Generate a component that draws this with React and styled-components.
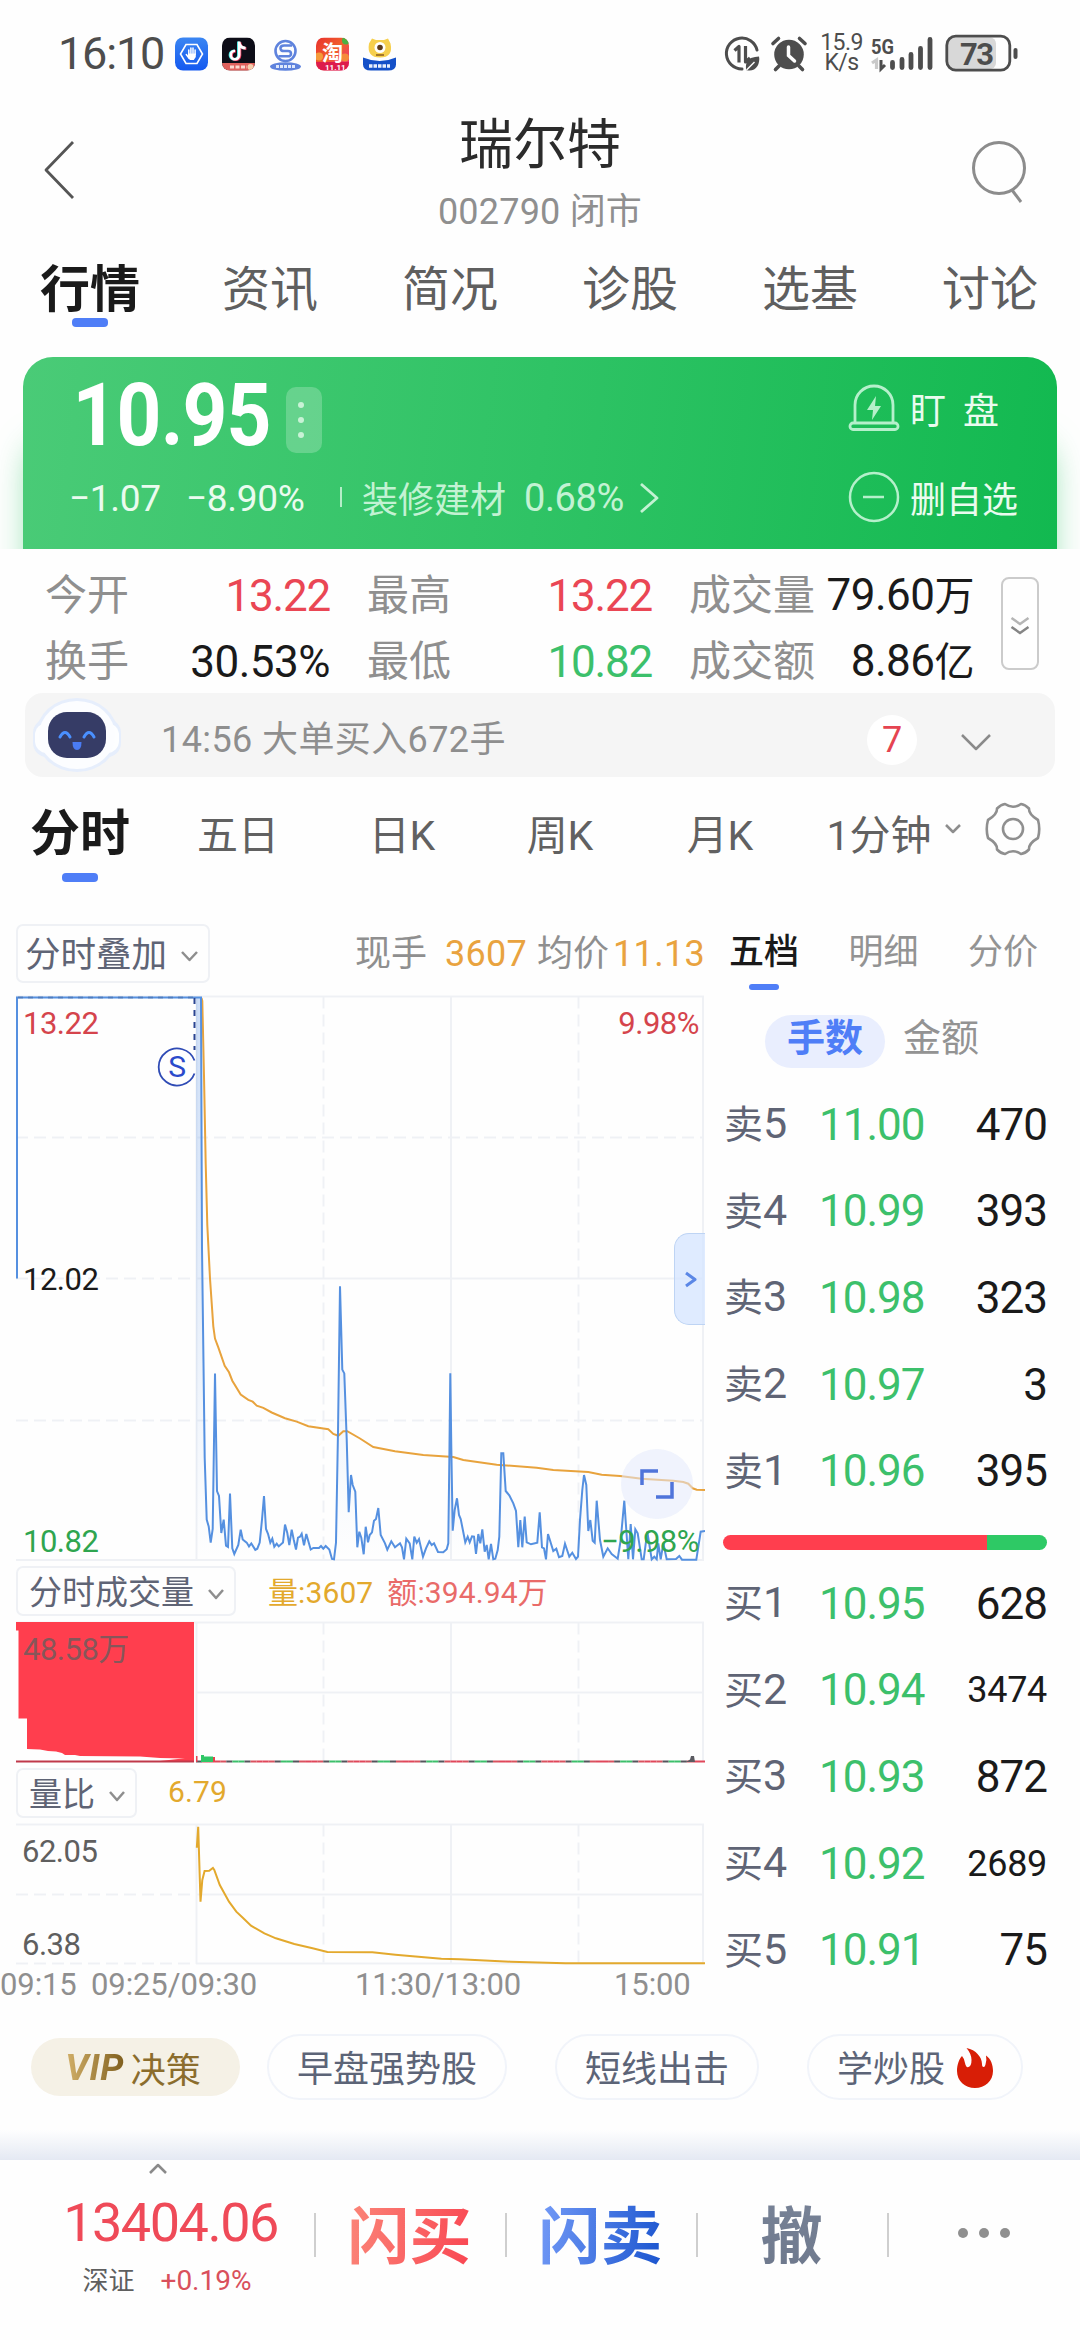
import React from 'react';
import styled, { createGlobalStyle, css } from 'styled-components';

const mainTabs = ['行情', '资讯', '简况', '诊股', '选基', '讨论'];

const stats = [
  { label: '今开', value: '13.22', color: '#ea4654' },
  { label: '最高', value: '13.22', color: '#ea4654' },
  { label: '成交量', value: '79.60', unit: '万', color: '#1a1a1a' },
  { label: '换手', value: '30.53%', color: '#1a1a1a' },
  { label: '最低', value: '10.82', color: '#3cc06b' },
  { label: '成交额', value: '8.86', unit: '亿', color: '#1a1a1a' },
];

const periods = ['分时', '五日', '日K', '周K', '月K'];

const asks = [
  ['5', '11.00', '470'],
  ['4', '10.99', '393'],
  ['3', '10.98', '323'],
  ['2', '10.97', '3'],
  ['1', '10.96', '395'],
];

const bids = [
  ['1', '10.95', '628'],
  ['2', '10.94', '3474'],
  ['3', '10.93', '872'],
  ['4', '10.92', '2689'],
  ['5', '10.91', '75'],
];

const pricePoints =
  '17,1278.5 17,997.6 201,997.6 202,1248 203.5,1363 204.7,1458 206.7,1519.6 208.7,1526.5 210.7,1542.6 212.7,1529 215,1373.4 217,1491 219,1496 221.3,1533 223.7,1519.6 226,1545.6 228,1547 230,1493.6 232.3,1548.3 234.3,1554 238.3,1545 240.7,1529.6 242.7,1539.5 246.7,1542.6 249,1546.4 251.3,1543.4 255.3,1549.8 257.3,1548.7 259.7,1542.6 262,1519.6 264,1496 266,1529 268,1533.8 270.3,1542.6 272.3,1538.7 274.3,1546.8 276.7,1543.7 278.7,1546.4 283,1542.6 285,1524.6 287.3,1533 289.3,1545.2 291.7,1529.6 293.7,1539.5 296,1549.5 298,1537.6 300,1536.8 301.7,1533.8 304,1545.2 306.3,1534 308.7,1542.6 310.7,1549.5 313.3,1548 319,1548 321,1546 323.3,1548.7 325.7,1546 329.3,1549.5 332,1559 334,1559.4 336,1542.6 338,1431.6 340,1286.2 342.3,1369.6 344.3,1373.4 346.7,1439 348.7,1512.3 351,1475 352.7,1485 355.3,1491.7 357.3,1547.3 359.3,1531.7 361.3,1537.7 363.7,1554.3 365.7,1526.7 368,1542.3 369.7,1535 372,1532.3 374,1520.7 376,1519 378.3,1508 380.7,1535 385,1543.3 387.3,1549.7 391.3,1541.3 395,1547.3 400,1543.3 402,1547.3 404,1559.3 406.3,1538.7 409.7,1543.3 412.3,1559.3 414.3,1536.7 416.7,1542.7 419,1539 423,1556.7 426,1548.3 429.3,1541.3 431.7,1545 434,1543.3 438,1552 443.3,1552.3 446.7,1549.3 448.3,1543.3 449.3,1463 450.3,1373.3 451.3,1447 452.7,1530.7 454.7,1510 457,1498.3 459,1515 460.7,1519 465.3,1542.3 467.7,1536.7 469.7,1542.3 472,1536.3 474,1536.7 476,1554 478.3,1534 480.3,1543.3 482.3,1529.3 484.7,1551.7 486.7,1545 488.7,1559.3 491,1544 493.3,1559.3 495.3,1558.7 497.7,1550 499.3,1536.7 501.3,1453.3 503.3,1453.3 505.7,1491 509.3,1495.3 513.3,1503.3 516,1511 518.3,1547.3 520.3,1520 522.3,1547.3 524.7,1516.7 526.7,1542.3 531,1544.3 537.3,1542.7 539.7,1512.3 542,1547.3 544,1548.3 546,1559.3 548,1534 553.3,1551 556.3,1548.7 559,1557.3 562.3,1556 565,1543.7 569.3,1556.7 572.3,1552.7 576,1559 578,1556.7 580,1520 582.3,1490 584,1475 586.3,1485 588.3,1531 590.3,1520 592.7,1540.7 594.7,1542.7 596.7,1500.7 600,1540 603.3,1556.7 607.7,1548.3 611.7,1554 617.7,1558.7 620.7,1540 624.3,1500.7 628.3,1559.3 630.7,1524 633,1559.3 635.3,1529.3 637.7,1533.3 641.7,1559.3 643.7,1559.3 647.3,1531.7 651.7,1559.3 654.3,1556.7 656.7,1559.3 658.3,1543.3 660.7,1559.3 663.3,1543.3 666.7,1559.3 676,1559 679.3,1556 682,1559.7 696.3,1559.7 700.7,1531.7 705,1531';

const avgPoints =
  '201.5,998 202.3,1001 204,1075.7 205.7,1163.7 207.3,1225 210,1278.5 213.3,1326.3 215,1338.6 218.3,1347.4 224.7,1365.8 229,1372.3 232.3,1380.7 240.7,1394.5 248.3,1399.8 252.7,1401.7 256.7,1405.6 263.3,1407.9 271.7,1412.5 285,1418.2 296.7,1421.6 308.3,1426.2 328.3,1429.3 333.3,1433.9 338.3,1435.8 343.3,1431.2 347.3,1431.2 360,1438.5 373.3,1447 395,1451.3 423.3,1455 453.3,1457 463.3,1460 496.7,1464.7 536.7,1467.7 553.3,1470 588.3,1472 601.7,1474.7 620,1476 641.7,1478.7 673.3,1480.7 683.3,1482 688.3,1483.7 692.7,1488.3 696.7,1489.7 705,1490';

const ratioPoints =
  '196.8,1847.7 198.2,1826.7 200.5,1901.7 202.3,1880 204.6,1871 209.2,1870.7 212.9,1868 214.3,1870 219.8,1885 229,1901.7 236.3,1911.7 242.8,1917.7 251,1925.7 264.4,1933.3 275.9,1938.3 294.3,1944 312.6,1948.3 327.4,1952 372.4,1952.3 395.4,1954.7 441.4,1958.7 459.8,1959.3 510.3,1961.7 565.5,1963.3 705,1963.3';

const tickColors = ['#55555c', '#3cbf6b', '#e0475a', '#3cbf6b', '#d9525f', '#4d9a68', '#3cbf6b', '#c94757'];

const Chevron = ({ w, h, color = '#8e8e8e', sw = 2.5, dir = 'down' }) => {
  const paths = {
    down: `M2 2 L${w / 2} ${h - 2} L${w - 2} 2`,
    up: `M2 ${h - 2} L${w / 2} 2 L${w - 2} ${h - 2}`,
    left: `M${w - 2} 2 L2 ${h / 2} L${w - 2} ${h - 2}`,
    right: `M2 2 L${w - 2} ${h / 2} L2 ${h - 2}`,
  };
  return (
    <svg width={w} height={h} fill="none" stroke={color} strokeWidth={sw} strokeLinejoin="round">
      <path d={paths[dir]} />
    </svg>
  );
};

const AppIcons = () => (
  <svg width="222" height="34" viewBox="175 36.5 222 34">
    <defs>
      <linearGradient id="shield" x1="0" y1="0" x2="0" y2="1">
        <stop offset="0" stopColor="#3b86f2" />
        <stop offset="1" stopColor="#1459f0" />
      </linearGradient>
      <linearGradient id="tao" x1="0" y1="0" x2="1" y2="1">
        <stop offset="0" stopColor="#e8302e" />
        <stop offset="0.5" stopColor="#f2602c" />
        <stop offset="1" stopColor="#e9258c" />
      </linearGradient>
      <clipPath id="clipNote">
        <rect x="222" y="37" width="33" height="33" rx="8" />
      </clipPath>
      <clipPath id="clipTao">
        <rect x="316" y="37" width="33" height="33" rx="8" />
      </clipPath>
    </defs>
    <rect x="175" y="37" width="33" height="33" rx="8" fill="url(#shield)" />
    <path d="M186 44 h11 l5.5 9.5 -5.5 9.5 h-11 l-5.5 -9.5z" fill="none" stroke="#fff" strokeWidth="1.6" />
    <path
      d="M188.8 54v-4.500M190.900 53v-5.500M193 53v-5.500M195.100 54v-4.500M186.300 54l3 4"
      stroke="#fff"
      strokeWidth="1.500"
      strokeLinecap="round"
      fill="none"
    />
    <path d="M188 53h7.800v3.500l-2 3h-3.800l-2-2.500z" fill="#fff" />
    <g clipPath="url(#clipNote)">
      <rect x="222" y="37" width="33" height="33" fill="#0d0d17" />
      <rect x="222" y="62.5" width="33" height="8" fill="#e0615d" />
      <path d="M230 66.5h17" stroke="#fbd9d0" strokeWidth="3" strokeDasharray="4 1.5" />
      <circle cx="250.5" cy="66.5" r="3" fill="#f7cfae" />
    </g>
    <g fill="none" strokeWidth="2.6">
      <path d="M238.3 41v13.5a4.2 4.2 0 1 1-4.2-4.2M238.3 42c.5 3.5 3 5.4 6.4 5.6" stroke="#44e6e0" />
      <path d="M240 41.5v13.5a4.2 4.2 0 1 1-4.2-4.2M240 42.5c.5 3.5 3 5.4 6.4 5.6" stroke="#f03a5f" />
      <path d="M239.2 41v13.5a4.2 4.2 0 1 1-4.2-4.2M239.2 42c.5 3.5 3 5.4 6.4 5.6" stroke="#fff" />
    </g>
    <g fill="none" stroke="#5f83dd" strokeWidth="2.6">
      <circle cx="285.5" cy="50.5" r="10" />
      <path d="M292 45h-8q-3.5 0-3.5 2.8t3.5 2.7h4q3 0 3 2.7t-3.5 2.6h-9" />
    </g>
    <ellipse cx="285.5" cy="66" rx="15.5" ry="4.3" fill="#5f83dd" />
    <path d="M276 66h19" stroke="#dfe8fb" strokeWidth="3" strokeDasharray="3 1" />
    <g clipPath="url(#clipTao)">
      <rect x="316" y="37" width="33" height="33" fill="url(#tao)" />
      <circle cx="346" cy="40" r="4" fill="#4cb043" />
      <circle cx="319" cy="56" r="4" fill="#f59b3a" />
      <circle cx="345" cy="57" r="4" fill="#f58a3a" />
      <rect x="316" y="61.5" width="33" height="9" fill="#dd1c4c" />
      <TaoText x="322" y="59">淘</TaoText>
      <TaoDate x="325" y="69">11.11</TaoDate>
    </g>
    <path d="M363 57q17 7 33 0v7q0 6-8 6h-17q-8 0-8-6z" fill="#1450c8" />
    <path d="M369 43l3-5 4 1.5h8l4-1.5 2.5 5q3 14-10.5 14t-11-14z" fill="#f6cf4d" />
    <circle cx="380" cy="47" r="5.5" fill="#fff" />
    <circle cx="380" cy="47" r="2.8" fill="#5b3a1c" />
    <path d="M376 54.5h8" stroke="#8a5a1c" strokeWidth="1.5" />
    <path d="M369 65.5h21" stroke="#e8effc" strokeWidth="3.5" strokeDasharray="3.5 1" />
  </svg>
);

const DataIcon = () => (
  <svg width="92" height="42" viewBox="723 33 92 42">
    <g fill="none" stroke="#4d4d4d" strokeWidth="3" strokeLinecap="round">
      <path d="M757 50A15.5 15.5 0 1 0 742 69" />
      <path d="M734.500 50.500l4.500-4v16M745.500 46v16l4.500-4" strokeWidth="3.2" strokeLinejoin="round" strokeLinecap="butt" />
    </g>
    <path d="M746 70q-1-9 5-12 4-1.500 8-1.500 1 5-1.500 9.500-4 6-11.500 4z" fill="#4d4d4d" />
    <path d="M746.5 70l8-8" stroke="#fff" strokeWidth="1.5" />
    <circle cx="789" cy="54.5" r="14.8" fill="#4d4d4d" />
    <path
      d="M773 43.5l5.5-5M805 43.5l-5.5-5M779 66l-3.5 3.5M799 66l3.5 3.5"
      stroke="#4d4d4d"
      strokeWidth="3.6"
      strokeLinecap="round"
    />
    <path d="M788.5 47v8.5l6 5.5" stroke="#fff" strokeWidth="3.5" fill="none" strokeLinecap="round" />
  </svg>
);

const SignalIcon = () => (
  <svg width="151" height="42" viewBox="868 33 151 42">
    <NetText x="871" y="53.5" textLength="23" lengthAdjust="spacingAndGlyphs">5G</NetText>
    <path d="M872 63l4.5-3v9" stroke="#c9c9c9" strokeWidth="3.2" fill="none" />
    <path d="M881 60v9l4-4" stroke="#4d4d4d" strokeWidth="3" fill="none" />
    <g stroke="#4d4d4d" strokeWidth="4.8" strokeLinecap="round">
      <path d="M892.5 62.5v5M902 59.5v8M911 54.5v13M920.5 48.5v19M930 39.5v28" />
    </g>
    <rect x="948" y="37.5" width="48" height="31.5" rx="6" fill="#d8d8d8" />
    <rect x="946.8" y="36.2" width="63" height="34" rx="9" fill="none" stroke="#4d4d4d" strokeWidth="2.8" />
    <path d="M1015.5 50v7" stroke="#4d4d4d" strokeWidth="4" strokeLinecap="round" />
    <BatteryText x="960" y="64.5" textLength="34">73</BatteryText>
  </svg>
);

const Robot = () => (
  <svg width="92" height="76" viewBox="-46 -38 92 76">
    <rect x="-44" y="-16" width="88" height="38" rx="14" fill="#e6eefc" />
    <ellipse rx="41" ry="37" fill="#e6eefc" />
    <rect x="-42" y="-12" width="84" height="30" rx="12" fill="#fdfeff" />
    <ellipse rx="38" ry="34" fill="#fcfdff" />
    <rect x="-29" y="-23" width="58" height="46" rx="19" fill="#363c66" />
    <path d="M-17 2q5-9 10 0M7 2q5-9 10 0" stroke="#4a90ff" strokeWidth="3" fill="none" strokeLinecap="round" />
    <path d="M-4.5 7h9q0 8-4.5 8t-4.5-8z" fill="#4a7cf5" />
  </svg>
);

const Grid = ({ top, bottom }) => (
  <g stroke="#eff1f5" strokeWidth="2" fill="none">
    <path d={`M16 ${top}H704M196.5 ${top}V${bottom}M451 ${top}V${bottom}M703 ${top}V${bottom}`} />
    <path d={`M323.5 ${top}V${bottom}M578.5 ${top}V${bottom}`} strokeDasharray="12 6" />
  </g>
);

const PriceChart = () => (
  <svg width="689" height="568" viewBox="16 994 689 568">
    <defs>
      <linearGradient id="area" x1="0" y1="0" x2="0" y2="1">
        <stop offset="0" stopColor="#5a93e6" stopOpacity="0.3" />
        <stop offset="1" stopColor="#5a93e6" stopOpacity="0" />
      </linearGradient>
    </defs>
    <Grid top={996.5} bottom={1561} />
    <g stroke="#eff1f5" strokeWidth="2">
      <path d="M16 1137.5H704M16 1420.5H704M16 1278.5H196" strokeDasharray="12 6" />
      <path d="M196 1278.5H704M16 1560H704" />
    </g>
    <polygon points={`196,1560 196,998 ${pricePoints.split(' ').slice(2).join(' ')} 705,1560`} fill="url(#area)" />
    <polyline points={avgPoints} fill="none" stroke="#e8a33d" strokeWidth="2" />
    <polyline points={pricePoints} fill="none" stroke="#5590e0" strokeWidth="2" />
    <path d="M18 997.5H196" stroke="#4a6fa8" strokeWidth="2" strokeDasharray="5 5" opacity="0.6" />
    <path d="M194.5 998V1050" stroke="#2a4592" strokeWidth="2" strokeDasharray="6 6" />
    <path d="M194.5 1060.5A18.5 18.5 0 1 0 194.5 1073.5" fill="none" stroke="#2f4bb5" strokeWidth="1.8" />
    <ChartText x="177" y="1077" textAnchor="middle" fill="#2b4acb" $size={30}>S</ChartText>
    <ChartText x="23" y="1033.5" fill="#d5444c">13.22</ChartText>
    <ChartText x="23" y="1289.5" fill="#1a1a1a">12.02</ChartText>
    <ChartText x="23" y="1551.5" fill="#2fa54f">10.82</ChartText>
    <ChartText x="699" y="1033.5" fill="#d5444c" textAnchor="end">9.98%</ChartText>
    <ChartText x="699" y="1551.5" fill="#2fa54f" textAnchor="end">−9.98%</ChartText>
  </svg>
);

const VolumeChart = () => (
  <svg width="689" height="144" viewBox="16 1620 689 144">
    <Grid top={1622.5} bottom={1762} />
    <path d="M196 1692.5H704" stroke="#eff1f5" strokeWidth="2" />
    <polygon
      points="16,1622 194,1622 194,1761 160,1761 178,1759 185,1758.5 160,1758 140,1756.5 80,1756 75,1755 65,1755 62,1753 56,1751.5 48,1751 40,1749.5 27,1749 27,1718.5 18.5,1718.5 18.5,1630.5 16,1630.5"
      fill="#ff3e4e"
    />
    <path d="M16 1761.5H194" stroke="#c0394a" strokeWidth="2" />
    {Array.from({ length: 84 }, (_, i) => (
      <rect key={i} x={196 + i * 6.06} y="1760.5" width="6.06" height="2" fill={tickColors[(i * i + 3 * i) % 8]} />
    ))}
    <path d="M201 1762v-7h3v1.5h9v5.5z" fill="#2fc766" />
    <path d="M213 1762v-5h2v5zM196 1762v-6h1.5v6z" fill="#e8404f" />
    <path d="M686 1762l4-2.5 1-3.5h3l1 6z" fill="#5a5a60" />
    <ChartText x="23" y="1660" fill="#5e5e5e" fillOpacity="0.75">48.58万</ChartText>
  </svg>
);

const RatioChart = () => (
  <svg width="689" height="144" viewBox="16 1822 689 144">
    <Grid top={1824.5} bottom={1964} />
    <g stroke="#eff1f5" strokeWidth="2">
      <path d="M196 1894.5H704M196 1963.5H704" />
      <path d="M16 1894.5H190M16 1963.5H190" strokeDasharray="12 6" />
    </g>
    <polyline points={ratioPoints} fill="none" stroke="#e3a92d" strokeWidth="2" />
    <ChartText x="22" y="1862" fill="#5f5f5f">62.05</ChartText>
    <ChartText x="22" y="1955" fill="#5f5f5f">6.38</ChartText>
  </svg>
);

const BookRow = ({ side, level, price, amount }) => (
  <Level>
    <LevelName>
      {side}
      <b>{level}</b>
    </LevelName>
    <LevelPrice>{price}</LevelPrice>
    <LevelAmount $small={amount.length > 3}>{amount}</LevelAmount>
  </Level>
);

const App = () => (
  <>
    <GlobalStyle />
    <Screen>
      <StatusBar>
        <Clock>16:10</Clock>
        <AppIcons />
        <StatusRight>
          <DataIcon />
          <Speed>
            <span>15.9</span>
            <span>K/s</span>
          </Speed>
          <SignalIcon />
        </StatusRight>
      </StatusBar>

      <Header>
        <Chevron w={31} h={60} dir="left" color="#555" sw={2.8} />
        <TitleBox>
          <Title>瑞尔特</Title>
          <Code>002790 闭市</Code>
        </TitleBox>
        <svg width="56" height="64" fill="none" stroke="#8c8c8c" strokeWidth="3">
          <circle cx="28" cy="28" r="25.5" />
          <path d="M41 50l9 12" />
        </svg>
      </Header>

      <MainTabs>
        {mainTabs.map((tab, i) => (
          <MainTab key={tab} $active={i === 0}>
            {tab}
          </MainTab>
        ))}
      </MainTabs>

      <HeroWrap>
        <Hero>
          <HeroLeft>
            <PriceLine>
              <Price>10.95</Price>
              <MoreBtn>
                <i />
                <i />
                <i />
              </MoreBtn>
            </PriceLine>
            <ChangeLine>
              <Change $w={117}>−1.07</Change>
              <Change $w={154}>−8.90%</Change>
              <Sector>装修建材</Sector>
              <SectorChange>0.68%</SectorChange>
              <Chevron w={20} h={32} dir="right" color="#c3f2d3" sw={2.8} />
            </ChangeLine>
          </HeroLeft>
          <HeroRight>
            <HeroAction $wide>
              <svg width="52" height="48" fill="none" stroke="#b5f0cb" strokeWidth="2.8" strokeLinejoin="round">
                <path d="M7 39V21a19 19 0 0 1 38 0v18" />
                <rect x="2" y="39" width="48" height="6.5" rx="3" />
                <path d="M28 12l-9 14h6l-1 10 9-14h-6z" fill="#b5f0cb" stroke="none" />
              </svg>
              <span>盯盘</span>
            </HeroAction>
            <HeroAction>
              <svg width="52" height="52" fill="none" stroke="#b5f0cb" strokeWidth="2.5">
                <circle cx="26" cy="26" r="24" />
                <path d="M15 26h21" />
              </svg>
              <span>删自选</span>
            </HeroAction>
          </HeroRight>
        </Hero>
      </HeroWrap>

      <StatsRow>
        <Stats>
          {stats.map(({ label, value, unit, color }) => (
            <Stat key={label}>
              <StatLabel>{label}</StatLabel>
              <StatValue $color={color} $wide={unit || value.endsWith('%')}>
                {value}
                {unit && <small>{unit}</small>}
              </StatValue>
            </Stat>
          ))}
        </Stats>
        <ExpandBtn>
          <svg width="20" height="20" fill="none" strokeWidth="2.5">
            <path d="M1.5 2l8.5 6 8.5-6" stroke="#b5b5b5" />
            <path d="M1.5 11l8.5 6 8.5-6" stroke="#858585" />
          </svg>
        </ExpandBtn>
      </StatsRow>

      <Notice>
        <Robot />
        <NoticeText>14:56 大单买入672手</NoticeText>
        <NoticeCount>7</NoticeCount>
        <Chevron w={32} h={18} color="#8a8a8a" />
      </Notice>

      <Periods>
        {periods.map((p, i) => (
          <Period key={p} $active={i === 0}>
            {p}
          </Period>
        ))}
        <Period>
          1分钟
          <Chevron w={18} h={11} />
        </Period>
        <Gear width="56" height="56" viewBox="-28 -28 56 56" fill="none" stroke="#8f8f8f" strokeWidth="2.6">
          <path
            d="M-8-25Q0-19.5 8-25Q12-24.5 16-20.5Q15.5-14.5 25-9Q27.5 0 25 9Q15.5 14.5 16 20.5Q12 24.5 8 25Q0 19.5-8 25Q-12 24.5-16 20.5Q-15.5 14.5-25 9Q-27.5 0-25-9Q-15.5-14.5-16-20.5Q-12-24.5-8-25Z"
            strokeLinejoin="round"
          />
          <circle r="10" />
        </Gear>
      </Periods>

      <Body>
        <ChartColumn>
          <OverlayRow>
            <Select $h={59} $w={194} $size={35.5}>
              分时叠加
              <Chevron w={19} h={12} />
            </Select>
            <Quote>
              现手<em>3607</em>均价<em>11.13</em>
            </Quote>
          </OverlayRow>
          <ChartBox>
            <PriceChart />
            <SideHandle>
              <Chevron w={13} h={17} dir="right" color="#5b87e6" sw={3} />
            </SideHandle>
            <FullscreenBtn>
              <svg width="36" height="32" fill="none" stroke="#4f74da" strokeWidth="3.5">
                <path d="M3 17V3H19M33 14V29H17" />
              </svg>
            </FullscreenBtn>
          </ChartBox>
          <IndicatorRow>
            <Select $h={50} $w={220} $size={33} $pad={11}>
              分时成交量
              <Chevron w={18} h={12} />
            </Select>
            <Figure $gap={32} $color="#e3a92d">量:3607</Figure>
            <Figure $gap={14} $color="#e96b69">额:394.94万</Figure>
          </IndicatorRow>
          <ChartBox>
            <VolumeChart />
          </ChartBox>
          <IndicatorRow>
            <Select $h={50} $w={121} $size={33} $pad={11}>
              量比
              <Chevron w={18} h={12} />
            </Select>
            <Figure $gap={31} $color="#e3a92d">6.79</Figure>
          </IndicatorRow>
          <ChartBox>
            <RatioChart />
          </ChartBox>
          <TimeAxis>
            <span>09:15</span>
            <span>09:25/09:30</span>
            <span>11:30/13:00</span>
            <span>15:00</span>
          </TimeAxis>
        </ChartColumn>

        <BookColumn>
          <BookTabs>
            <BookTab $active>五档</BookTab>
            <BookTab>明细</BookTab>
            <BookTab>分价</BookTab>
          </BookTabs>
          <UnitSwitch>
            <Unit $active>手数</Unit>
            <Unit>金额</Unit>
          </UnitSwitch>
          {asks.map(([level, price, amount]) => (
            <BookRow key={level} side="卖" level={level} price={price} amount={amount} />
          ))}
          <RatioBar />
          {bids.map(([level, price, amount]) => (
            <BookRow key={level} side="买" level={level} price={price} amount={amount} />
          ))}
        </BookColumn>
      </Body>

      <Shortcuts>
        <VipChip>
          <b>VIP</b>决策
        </VipChip>
        <Chip $w={240} $gap={27}>早盘强势股</Chip>
        <Chip $w={204} $gap={48}>短线出击</Chip>
        <Chip $w={216} $gap={48}>
          学炒股
          <svg width="36" height="40" fill="#d81e06">
            <path d="M9.5 0C19 2 25 9 25 16q0 3 1.5 3t2-2.5q1.5-4 .5-9C34 11 36 17 36 23 36 33 28 40 18 40S0 33 0 23C0 17 2 11 5 8q2 2 3 7t3.500 4q3-1 3-7 0-6-5-12z" />
          </svg>
        </Chip>
      </Shortcuts>
      <Fade />

      <BottomBar>
        <IndexCell>
          <Chevron w={20} h={12} dir="up" color="#8a8a8a" />
          <IndexValue>13404.06</IndexValue>
          <IndexInfo>
            深证 <span>+0.19%</span>
          </IndexInfo>
        </IndexCell>
        <Trade $bg="linear-gradient(100deg, #fb8a7b, #f93f4e)">闪买</Trade>
        <Trade $bg="linear-gradient(100deg, #6f97f5 10%, #1b55cf 90%)">闪卖</Trade>
        <Trade $bg="linear-gradient(#7c879b, #667084)">撤</Trade>
        <Dots>
          <i />
          <i />
          <i />
        </Dots>
      </BottomBar>
    </Screen>
  </>
);

export default App;

const GlobalStyle = createGlobalStyle`
  body {
    margin: 0;
    background: #fefefe;
    font-family: Roboto, 'Noto Sans CJK SC', sans-serif;
  }

  svg {
    display: block;
    flex-shrink: 0;
  }
`;

const svgFont = css`
  font-family: Roboto, 'Noto Sans CJK SC', sans-serif;
`;

const ChartText = styled.text`
  ${svgFont}
  font-size: ${({ $size = 31 }) => $size}px;
  letter-spacing: -0.5px;
`;

const NetText = styled.text`
  ${svgFont}
  font-size: 21px;
  font-weight: 700;
  fill: #4d4d4d;
`;

const BatteryText = styled.text`
  ${svgFont}
  font-size: 31px;
  font-weight: 700;
  fill: #4d4d4d;
`;

const TaoText = styled.text`
  ${svgFont}
  font-size: 21px;
  font-weight: 700;
  fill: #fff;
`;

const TaoDate = styled.text`
  ${svgFont}
  font-size: 8px;
  font-weight: 700;
  fill: #fff;
`;

const Screen = styled.div`
  width: 1080px;
  height: 2340px;
  overflow: hidden;
  background: #fefefe;
  color: #1a1a1a;
`;

const StatusBar = styled.div`
  height: 108px;
  display: flex;
  align-items: center;
  padding: 0 61px 0 58px;
  box-sizing: border-box;
`;

const Clock = styled.div`
  width: 117px;
  font-size: 45px;
  line-height: 54px;
  letter-spacing: -1.2px;
  color: #4d4d4d;
`;

const StatusRight = styled.div`
  margin-left: auto;
  display: flex;
  align-items: center;
`;

const Speed = styled.div`
  width: 53px;
  display: flex;
  flex-direction: column;
  align-items: center;
  padding-bottom: 2px;
  font-size: 23px;
  line-height: 20px;
  letter-spacing: -0.6px;
  color: #4d4d4d;
`;

const Header = styled.div`
  height: 142px;
  display: flex;
  justify-content: space-between;
  padding: 0 53px 0 44px;
  box-sizing: border-box;

  & > svg {
    margin-top: 32px;
  }
`;

const TitleBox = styled.div`
  display: flex;
  flex-direction: column;
  align-items: center;
  margin-left: 34px;
`;

const Title = styled.div`
  margin-top: 3px;
  font-size: 54px;
  line-height: 70px;
  color: #2b2b2b;
`;

const Code = styled.div`
  font-size: 36px;
  line-height: 62px;
  letter-spacing: 0.2px;
  color: #8f8f8f;
`;

const MainTabs = styled.div`
  height: 95px;
  display: grid;
  grid-template-columns: repeat(6, 180px);
`;

const activeMark = css`
  position: relative;
  font-weight: 700;
  color: #1a1a1a;

  &::after {
    content: '';
    position: absolute;
    left: 50%;
    width: 36px;
    height: 9px;
    margin-left: -18px;
    border-radius: 4px;
    background: #4f7ef7;
  }
`;

const MainTab = styled.div`
  font-size: 48px;
  line-height: 80px;
  text-align: center;
  color: #5f5f5f;

  ${({ $active }) =>
    $active &&
    css`
      ${activeMark}
      font-size: 50px;

      &::after {
        top: 68px;
      }
    `}
`;

const HeroWrap = styled.div`
  height: 204px;
  padding: 12px 23px 0;
  box-sizing: border-box;
  overflow: hidden;
`;

const Hero = styled.div`
  height: 192px;
  display: flex;
  justify-content: space-between;
  border-radius: 30px 30px 0 0;
  background: linear-gradient(97deg, #4acb77, #2fc365 50%, #12b950);
  box-shadow: 0 80px 34px -8px rgba(50, 200, 105, 0.65);
`;

const HeroLeft = styled.div`
  padding-left: 46px;
`;

const PriceLine = styled.div`
  height: 116px;
  display: flex;
  align-items: center;
`;

const Price = styled.div`
  width: 217px;
  padding-left: 4px;
  box-sizing: border-box;
  font-size: 88px;
  line-height: 100px;
  font-weight: 700;
  letter-spacing: -1px;
  color: #fff;
  transform: scaleX(0.89);
  transform-origin: left;
`;

const MoreBtn = styled.div`
  width: 36px;
  height: 66px;
  margin-top: 10px;
  display: flex;
  flex-direction: column;
  align-items: center;
  justify-content: center;
  gap: 9px;
  border-radius: 10px;
  background: rgba(255, 255, 255, 0.22);

  i {
    width: 6px;
    height: 6px;
    margin-right: 6px;
    border-radius: 50%;
    background: #c9f2d6;
  }
`;

const ChangeLine = styled.div`
  height: 50px;
  display: flex;
  align-items: center;
`;

const Change = styled.div`
  width: ${({ $w }) => $w}px;
  font-size: 37px;
  letter-spacing: -0.3px;
  white-space: nowrap;
  color: #eafbef;
`;

const Sector = styled.div`
  display: flex;
  align-items: center;
  gap: 20px;
  width: 184px;
  margin-top: -2px;
  font-size: 36px;
  color: #c3f2d3;

  &::before {
    content: '';
    width: 2px;
    height: 20px;
    background: #b5eec8;
  }
`;

const SectorChange = styled.div`
  width: 115px;
  font-size: 38px;
  letter-spacing: -0.4px;
  color: #c3f2d3;
`;

const HeroRight = styled.div`
  width: 209px;
  padding-top: 10px;
`;

const HeroAction = styled.div`
  height: ${({ $wide }) => ($wide ? 82 : 96)}px;
  display: flex;
  align-items: center;
  gap: 10px;
  font-size: 36px;
  letter-spacing: ${({ $wide }) => ($wide ? 17 : 0)}px;
  color: #eafbef;
`;

const StatsRow = styled.div`
  height: 144px;
  display: flex;
  justify-content: space-between;
  padding: 0 41px 0 45px;
  box-sizing: border-box;
`;

const Stats = styled.div`
  width: 929px;
  height: 132px;
  padding-top: 14px;
  display: grid;
  grid-template-columns: repeat(3, 285px);
  grid-auto-rows: 66px;
  column-gap: 37px;
`;

const Stat = styled.div`
  display: flex;
  align-items: center;
  justify-content: space-between;
  line-height: 60px;
`;

const StatLabel = styled.div`
  font-size: 42px;
  color: #8f8f8f;
`;

const StatValue = styled.div`
  font-size: 44px;
  letter-spacing: ${({ $wide }) => ($wide ? -0.5 : -1.2)}px;
  white-space: nowrap;
  color: ${({ $color }) => $color};

  small {
    font-size: 40px;
  }
`;

const ExpandBtn = styled.div`
  width: 38px;
  height: 93px;
  margin-top: 28px;
  padding-top: 5px;
  display: flex;
  align-items: center;
  justify-content: center;
  box-sizing: border-box;
  border: 2.5px solid #cbcbcb;
  border-radius: 8px;
`;

const Notice = styled.div`
  height: 84px;
  margin: 0 25px;
  padding: 0 63px 0 6px;
  display: flex;
  align-items: center;
  border-radius: 18px;
  background: #f5f5f5;
`;

const NoticeText = styled.div`
  flex: 1;
  margin: 10px 0 0 38px;
  font-size: 36px;
  line-height: 50px;
  letter-spacing: 0.4px;
  color: #8e8e8e;
`;

const NoticeCount = styled.div`
  width: 50px;
  height: 50px;
  margin: 10px 43px 0 0;
  border-radius: 50%;
  background: #fff;
  font-size: 36px;
  line-height: 51px;
  text-align: center;
  color: #e54451;

  & + svg {
    margin-top: 14px;
  }
`;

const Periods = styled.div`
  height: 135px;
  display: grid;
  grid-template-columns: 160px 156px 172px 144px 176px 172px 66px;
`;

const Period = styled.div`
  height: 110px;
  display: flex;
  align-items: center;
  justify-content: center;
  gap: 12px;
  font-size: 41px;
  color: #616161;

  svg {
    margin-top: -8px;
  }

  ${({ $active }) =>
    $active &&
    css`
      ${activeMark}
      height: 104px;
      font-size: 50px;

      &::after {
        top: 96px;
      }
    `}
`;

const Gear = styled.svg`
  margin: 24px 0 0 5px;
`;

const Body = styled.div`
  height: 1092px;
  display: grid;
  grid-template-columns: 705px 1fr;
`;

const ChartColumn = styled.div`
  min-width: 0;
`;

const OverlayRow = styled.div`
  height: 82px;
  display: flex;
  align-items: center;
  justify-content: space-between;
  padding-left: 16px;
`;

const Select = styled.div`
  width: ${({ $w }) => $w}px;
  height: ${({ $h }) => $h}px;
  padding: 4px 9px 0 ${({ $pad = 7 }) => $pad}px;
  display: flex;
  align-items: center;
  justify-content: space-between;
  box-sizing: border-box;
  border: 2px solid #eff1f5;
  border-radius: 7px;
  font-size: ${({ $size }) => $size}px;
  line-height: 46px;
  white-space: nowrap;
  color: #5f6475;

  svg {
    margin-top: 1px;
  }
`;

const Quote = styled.div`
  margin-top: -6px;
  font-size: 36px;
  color: #8f8f8f;
  white-space: nowrap;

  em {
    margin: 0 0 0 4px;
    font-style: normal;
    letter-spacing: 0.3px;
    color: #e9a33f;
  }

  em:first-of-type {
    margin: 0 10px 0 18px;
  }
`;

const ChartBox = styled.div`
  position: relative;
  margin-left: 16px;
`;

const SideHandle = styled.div`
  position: absolute;
  right: 0;
  top: 239px;
  width: 31px;
  height: 92px;
  display: flex;
  align-items: center;
  justify-content: center;
  box-sizing: border-box;
  border: 1.5px solid #bed4f4;
  border-right: 0;
  border-radius: 15px 0 0 15px;
  background: rgba(212, 228, 255, 0.75);
`;

const FullscreenBtn = styled.div`
  position: absolute;
  left: 605px;
  top: 455px;
  width: 72px;
  height: 70px;
  display: flex;
  align-items: center;
  justify-content: center;
  border-radius: 50%;
  background: rgba(228, 234, 252, 0.55);
`;

const IndicatorRow = styled.div`
  height: 58px;
  display: flex;
  align-items: center;
  padding-left: 16px;
`;

const Figure = styled.div`
  margin: -3px 0 0 ${({ $gap }) => $gap}px;
  font-size: 30px;
  letter-spacing: 0.1px;
  white-space: nowrap;
  color: ${({ $color }) => $color};
`;

const TimeAxis = styled.div`
  height: 38px;
  display: grid;
  grid-template-columns: 91px 264px 259px auto;
  font-size: 31px;
  line-height: 38px;
  letter-spacing: -0.1px;
  color: #8f8f8f;
`;

const BookColumn = styled.div`
  padding: 0 33px 0 18px;
`;

const BookTabs = styled.div`
  height: 82px;
  display: flex;
  justify-content: space-between;
  padding: 0 9px 0 6px;
`;

const BookTab = styled.div`
  font-size: 35px;
  line-height: 82px;
  color: #939393;

  ${({ $active }) =>
    $active &&
    css`
      ${activeMark}
      font-weight: 500;

      &::after {
        top: 72px;
        width: 30px;
        height: 6px;
        margin-left: -15px;
      }
    `}
`;

const UnitSwitch = styled.div`
  display: flex;
  margin: 21px 0 13px 42px;
`;

const Unit = styled.div`
  width: 120px;
  height: 53px;
  border-radius: 27px;
  font-size: 38px;
  line-height: 47px;
  text-align: center;
  color: #939393;

  ${({ $active }) =>
    $active &&
    css`
      margin-right: -4px;
      background: #e9eefe;
      font-weight: 700;
      color: #4f7ef7;
    `}
`;

const Level = styled.div`
  height: 86.6px;
  display: flex;
  align-items: center;
  line-height: 60px;
`;

const LevelName = styled.div`
  width: 95px;
  padding-left: 1px;
  font-size: 39px;
  color: #5f6475;

  b {
    font-size: 43px;
    font-weight: 400;
  }
`;

const LevelPrice = styled.div`
  padding-top: 1px;
  font-size: 44px;
  letter-spacing: -1px;
  color: #3cc06b;
`;

const LevelAmount = styled.div`
  margin-left: auto;
  padding-top: 1px;
  font-size: ${({ $small }) => ($small ? 36 : 44)}px;
  letter-spacing: ${({ $small }) => ($small ? -0.3 : -1)}px;
  color: #1a1a1a;
`;

const RatioBar = styled.div`
  height: 15px;
  margin: 21px 0 10px;
  border-radius: 8px;
  background: linear-gradient(90deg, #ff3e4e 81.5%, #2ec965 81.5%);
`;

const Shortcuts = styled.div`
  height: 126px;
  display: flex;
  align-items: center;
  padding-left: 31px;
`;

const VipChip = styled.div`
  width: 209px;
  height: 58px;
  display: flex;
  align-items: center;
  justify-content: center;
  border-radius: 29px;
  background: #f5f1e6;
  font-size: 35px;
  color: #8b6d2d;

  b {
    margin: 0 5px 0 -5px;
    padding-right: 2px;
    font-size: 37px;
    letter-spacing: 0.5px;
    font-style: italic;
    background: linear-gradient(90deg, #d3b16a, #7d5d1c);
    background-clip: text;
    color: transparent;
  }
`;

const Chip = styled.div`
  width: ${({ $w }) => $w}px;
  height: 66px;
  margin-left: ${({ $gap }) => $gap}px;
  padding-bottom: 3px;
  display: flex;
  align-items: center;
  justify-content: center;
  gap: 12px;
  box-sizing: border-box;
  border: 2.5px solid #f1f4fa;
  border-radius: 33px;
  font-size: 36px;
  color: #5c6477;

  svg {
    margin-top: 5px;
  }
`;

const Fade = styled.div`
  height: 30px;
  background: linear-gradient(#fefefe, #e4e9f3);
`;

const BottomBar = styled.div`
  height: 180px;
  display: grid;
  grid-template-columns: 314px 191px 191px 191px 193px;
`;

const IndexCell = styled.div`
  display: flex;
  flex-direction: column;
  align-items: center;
  padding: 3px 0 0;

  svg {
    margin-left: 1px;
  }
`;

const IndexValue = styled.div`
  margin: 17px 0 0 27px;
  font-size: 54px;
  line-height: 62px;
  letter-spacing: -1.5px;
  color: #ef4a58;
`;

const IndexInfo = styled.div`
  margin: 9px 0 0 20px;
  display: flex;
  gap: 26px;
  font-size: 26px;
  line-height: 36px;
  color: #5f5f5f;

  span {
    font-size: 28px;
    color: #d9505c;
  }
`;

const divider = css`
  position: relative;

  &::before {
    content: '';
    position: absolute;
    left: 0;
    top: 53px;
    width: 1.5px;
    height: 44px;
    background: #cfcfcf;
  }
`;

const Trade = styled.div`
  ${divider}
  font-size: 62px;
  font-weight: 700;
  line-height: 156px;
  text-align: center;
  background: ${({ $bg }) => $bg} 50% / 126px 100% no-repeat;
  background-clip: text;
  color: transparent;
`;

const Dots = styled.div`
  ${divider}
  height: 145px;
  display: flex;
  align-items: center;
  justify-content: center;
  gap: 11px;

  i {
    width: 10px;
    height: 10px;
    border-radius: 50%;
    background: #8f8f8f;
  }
`;
